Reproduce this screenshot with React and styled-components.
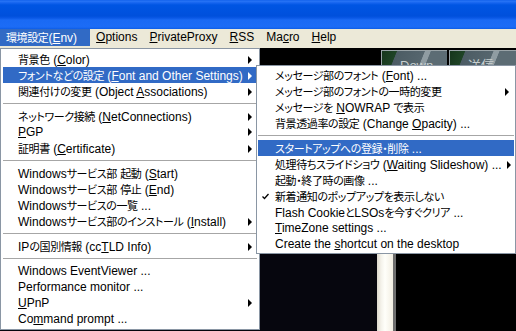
import React from 'react';
import styled, { createGlobalStyle } from 'styled-components';

const GlobalStyle = createGlobalStyle`
  html, body {
    margin: 0;
    padding: 0;
    overflow: hidden;
    background: #000;
  }
  body {
    font-family: "Liberation Sans", "Noto Sans CJK JP", sans-serif;
    font-size: 12px;
  }
`;

const Window = styled.div`
  width: 516px;
  height: 331px;
  display: flex;
  flex-direction: column;
  overflow: hidden;
`;

const TitleBar = styled.div`
  height: 29px;
  flex: none;
  background: linear-gradient(
    to bottom,
    #0a5ae8 0,
    #2a76f6 1px,
    #1463ee 3px,
    #0055e3 5px,
    #0050dc 16px,
    #0a58e6 18px,
    #1a6af4 20px,
    #1c6cf6 27px,
    #0d5de6 29px
  );
`;

const MenuBar = styled.div`
  height: 19px;
  flex: none;
  display: flex;
  align-items: flex-start;
  background: #ece9d8;
`;

const BarItem = styled.div`
  height: 17px;
  line-height: 17px;
  padding: ${({ $first }) => ($first ? '0 13px 0 6px' : '0 6px')};
  color: ${({ $active }) => ($active ? '#fff' : '#000')};
  background: ${({ $active }) => ($active ? '#316ac5' : 'transparent')};
  white-space: nowrap;
`;

const Body = styled.div`
  flex: 1;
  position: relative;
  display: flex;
  flex-direction: column;
  background: #000;
`;

const Toolbar = styled.div`
  height: 17px;
  flex: none;
  display: flex;
  justify-content: flex-end;
  gap: 2px;
  overflow: hidden;
  background: #000;
`;

const ToolButton = styled.div`
  width: ${({ $w }) => $w}px;
  height: 22px;
  flex: none;
  box-sizing: border-box;
  margin-top: 2px;
  padding: 7px 0 0 18px;
  color: #c8d0d0;
  font-size: 13px;
  line-height: 15px;
  border-left: 1px solid #9aa4a8;
  border-top: 1px solid #9aa4a8;
  background: linear-gradient(
    112deg,
    #16351c 0,
    #1f4426 20%,
    #4c5c64 21%,
    #56666e 58%,
    #8f9ca2 59%,
    #8f9ca2 66%,
    #5c6c74 67%
  );
`;

const Main = styled.div`
  flex: 1;
  display: grid;
  grid-template-columns: 377px 16px 3px 1fr;
`;

const Pane = styled.div`
  background: ${({ $bg }) => $bg};
`;

const Strip = styled.div`
  background: linear-gradient(to right, #dcd8cc 0, #f4f2ea 4px, #fffffa 8px, #f2eee2 16px);
`;

const Menu = styled.div`
  position: absolute;
  top: ${({ $top }) => $top}px;
  left: ${({ $left }) => $left}px;
  width: ${({ $w }) => $w}px;
  box-sizing: border-box;
  padding: ${({ $pad }) => $pad}px;
  background: #fff;
  border: 1px solid #8a96a4;
  z-index: ${({ $z }) => $z};
`;

const Item = styled.div`
  height: 16px;
  display: grid;
  grid-template-columns: ${({ $check }) => $check}px 1fr 14px;
  align-items: center;
  white-space: nowrap;
  color: ${({ $active }) => ($active ? '#fff' : '#000')};
  background: ${({ $active }) => ($active ? '#316ac5' : 'transparent')};
`;

const Label = styled.span`
  line-height: 16px;
`;

const Jp = styled.span`
  font-family: "Noto Sans CJK JP", sans-serif;
  font-size: 11px;
  letter-spacing: -0.4px;
  font-feature-settings: "palt";
`;

const Arrow = styled.span`
  justify-self: end;
  margin-right: 5px;
  width: 0;
  height: 0;
  border-top: 4px solid transparent;
  border-bottom: 4px solid transparent;
  border-left: 4px solid ${({ $active }) => ($active ? '#fff' : '#000')};
`;

const Separator = styled.div`
  height: 1px;
  margin: 4px 0 3px;
  background: #a6a6a6;
  border-bottom: 1px solid #fff;
`;

const CheckCell = styled.span`
  display: flex;
  justify-content: center;
  padding-right: 2px;
`;

const CJK = /([\u3000-\u30ff\u4e00-\u9fff\uff00-\uffef]+)/;

const renderText = (str, key) =>
  str.split(CJK).map((part, i) =>
    i % 2 ? <Jp key={`${key}-${i}`}>{part}</Jp> : part ? <React.Fragment key={`${key}-${i}`}>{part}</React.Fragment> : null
  );

const renderLabel = (label) =>
  label.split(/&(.)/).map((part, i) =>
    i % 2 ? <u key={i}>{renderText(part, i)}</u> : renderText(part, i)
  );

const Check = () => (
  <svg width="7" height="7" viewBox="0 0 7 7">
    <polyline points="0.5,3.5 2.5,5.5 6.5,1" fill="none" stroke="#000" strokeWidth="1.3" />
  </svg>
);

const menuBar = [
  '環境設定(&Env)',
  '&Options',
  '&PrivateProxy',
  '&RSS',
  'Ma&cro',
  '&Help',
];

const leftItems = [
  { label: '背景色 (&Color)', sub: true },
  { label: 'フォントなどの設定 (&Font and Other Settings)', sub: true, active: true },
  { label: '関連付けの変更 (Object &Associations)', sub: true },
  'sep',
  { label: 'ネットワーク接続 (&NetConnections)', sub: true },
  { label: '&PGP', sub: true },
  { label: '証明書 (&Certificate)', sub: true },
  'sep',
  { label: 'Windowsサービス部 起動 (&Start)' },
  { label: 'Windowsサービス部 停止 (&End)' },
  { label: 'Windowsサービスの一覧 ...' },
  { label: 'Windowsサービス部のインストール (&Install)', sub: true },
  'sep',
  { label: 'IPの国別情報 (cc&TLD Info)', sub: true },
  'sep',
  { label: 'Windows EventViewer ...' },
  { label: 'Performance monitor ...' },
  { label: '&UPnP', sub: true },
  { label: 'Co&mmand prompt ...' },
];

const subItems = [
  { label: 'メッセージ部のフォント (&Font) ...' },
  { label: 'メッセージ部のフォントの一時的変更', sub: true },
  { label: 'メッセージを &NOWRAP で表示' },
  { label: '背景透過率の設定 (Change &Opacity) ...' },
  'sep',
  { label: 'スタートアップへの登録・削除 ...', active: true },
  { label: '処理待ちスライドショウ (&Waiting Slideshow) ...', sub: true },
  { label: '起動・終了時の画像 ...' },
  { label: '新着通知のポップアップを表示しない', checked: true },
  { label: 'Flash CookieとLSOsを今すぐクリア ...' },
  { label: '&TimeZone settings ...' },
  { label: 'Create the &shortcut on the desktop' },
];

const MenuList = ({ items, check }) =>
  items.map((it, i) =>
    it === 'sep' ? (
      <Separator key={i} />
    ) : (
      <Item key={i} $active={it.active} $check={check}>
        <CheckCell>{it.checked && <Check />}</CheckCell>
        <Label>{renderLabel(it.label)}</Label>
        {it.sub ? <Arrow $active={it.active} /> : <span />}
      </Item>
    )
  );

export default function App() {
  return (
    <Window>
      <GlobalStyle />
      <TitleBar />
      <MenuBar>
        {menuBar.map((m, i) => (
          <BarItem key={m} $first={i === 0} $active={i === 0}>
            {renderLabel(m)}
          </BarItem>
        ))}
      </MenuBar>
      <Body>
        <Toolbar>
          <ToolButton $w={66}>Down</ToolButton>
          <ToolButton $w={67}>送信</ToolButton>
        </Toolbar>
        <Main>
          <Pane $bg="#06060e" />
          <Strip />
          <Pane $bg="#6e6e6e" />
          <Pane $bg="#000" />
        </Main>
        <Menu $top={0} $left={0} $w={260} $pad={2} $z={1}>
          <MenuList items={leftItems} check={15} />
        </Menu>
        <Menu $top={17} $left={256} $w={260} $pad={1} $z={2}>
          <MenuList items={subItems} check={17} />
        </Menu>
      </Body>
    </Window>
  );
}
